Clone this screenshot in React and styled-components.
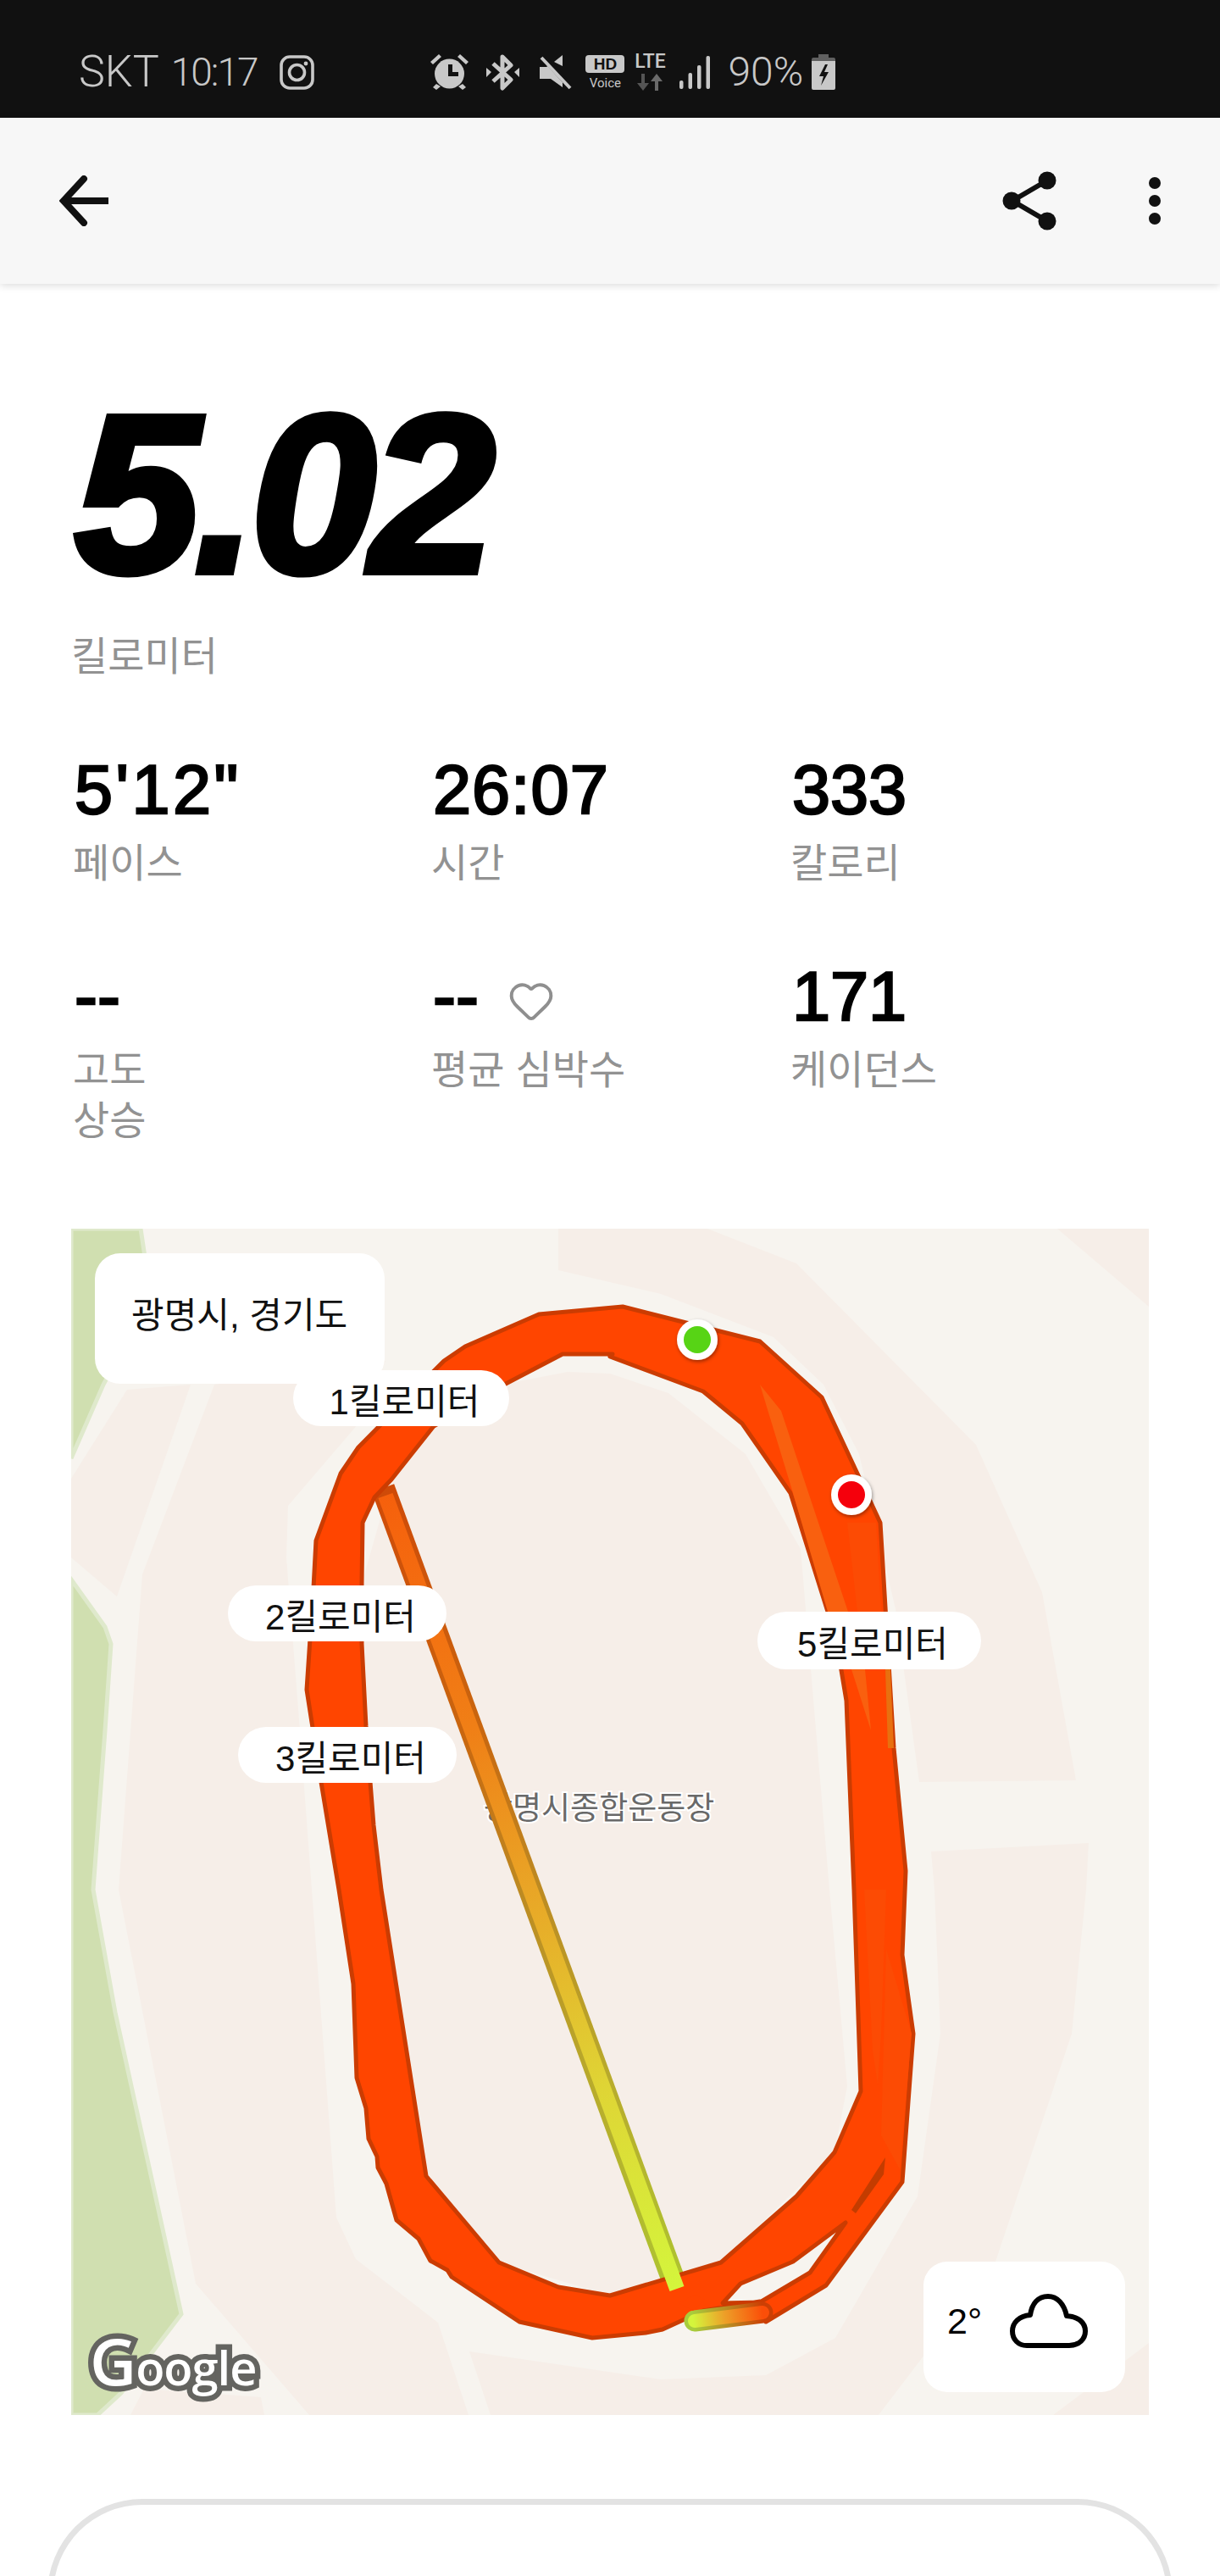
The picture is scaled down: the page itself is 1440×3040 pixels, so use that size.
import React from 'react';
import styled, { createGlobalStyle } from 'styled-components';
import { Heart } from 'lucide-react';

const Global = createGlobalStyle`
  html, body {
    margin: 0;
    padding: 0;
    background: #fff;
    overflow: hidden;
  }
`;

const sans = `"Liberation Sans", "Noto Sans CJK KR", sans-serif`;

const Page = styled.div`
  width: 1440px;
  height: 3040px;
  overflow: hidden;
  background: #fff;
  font-family: ${sans};
`;

const StatusBar = styled.div`
  height: 139px;
  background: #111;
  color: #c8c8c8;
  display: flex;
  align-items: center;
  padding: 31px 0 0 93px;
  box-sizing: border-box;
  font-family: Roboto, sans-serif;
  font-weight: 300;
`;

const StatusText = styled.span`
  font-size: ${(p) => p.$size}px;
  line-height: 50px;
  letter-spacing: ${(p) => p.$track || 0}px;
  margin-left: ${(p) => p.$gap || 0}px;
`;

const StatusIcon = styled.svg`
  display: block;
  flex: none;
  margin-left: ${(p) => p.$gap || 0}px;
`;

const NetArrows = styled.svg`
  display: block;
  margin-top: 4px;
`;

const NetStack = styled.div`
  width: 46px;
  margin-left: ${(p) => p.$gap}px;
  display: flex;
  flex-direction: column;
  align-items: center;
`;

const HdBadge = styled.span`
  width: 46px;
  height: 21px;
  border-radius: 4px;
  background: #c8c8c8;
  color: #111;
  font-size: 19px;
  line-height: 21px;
  font-weight: 700;
  text-align: center;
  font-family: "Liberation Sans", sans-serif;
`;

const VoiceLabel = styled.span`
  font-size: 15px;
  line-height: 16px;
  margin-top: 4px;
  font-weight: 400;
`;

const LteLabel = styled.span`
  font-size: 23px;
  line-height: 20px;
  font-weight: 500;
`;

const AppBar = styled.header`
  position: relative;
  height: 196px;
  background: #f7f7f7;
  box-shadow: 0 2px 9px rgba(0, 0, 0, 0.14);
  display: flex;
  align-items: center;
  justify-content: space-between;
  padding: 0 70px 0 70px;
  box-sizing: border-box;
`;

const ActionGroup = styled.div`
  display: flex;
  align-items: center;
  gap: 107px;
`;

const Content = styled.main`
  padding: 0 84px;
`;

const Distance = styled.div`
  margin-top: 115px;
  height: 266px;
  padding-left: 4px;
  font-size: 266px;
  line-height: 266px;
  font-weight: 700;
  font-style: italic;
  letter-spacing: -7px;
  color: #000;
  -webkit-text-stroke: 8px #000;
`;

const DistanceUnit = styled.div`
  margin-top: 29px;
  font-size: 47px;
  line-height: 60px;
  color: #929292;
`;

const StatGrid = styled.div`
  display: grid;
  grid-template-columns: 423px 424px 1fr;
  row-gap: 84px;
  margin-top: 84px;
  padding-left: 4px;
`;

const Stat = styled.div`
  min-height: 150px;
`;

const StatValue = styled.div`
  display: flex;
  align-items: center;
  gap: 34px;
  height: 86px;
  font-size: 81px;
  line-height: 86px;
  font-weight: 400;
  letter-spacing: ${(p) => p.$track || 0}px;
  color: #000;
  -webkit-text-stroke: 2.5px #000;
`;

const StatLabel = styled.div`
  margin: 14px 0 0 -2px;
  font-size: 47px;
  line-height: 60px;
  color: #929292;
  white-space: pre-line;
`;

const HeartMark = styled(Heart)`
  margin-top: 10px;
  -webkit-text-stroke: 0;
`;

const MapBox = styled.section`
  position: relative;
  width: 1272px;
  height: 1400px;
  margin-top: 97px;
  overflow: hidden;
  background: #f7f4ef;
`;

const MapArt = styled.svg`
  display: block;
  width: 100%;
  height: 100%;
`;

const MapText = styled.text`
  font-family: ${sans};
  font-size: 37px;
  fill: #696969;
  stroke: #fff;
  stroke-width: 4px;
  paint-order: stroke fill;
`;

const PlaceCard = styled.div`
  position: absolute;
  left: 28px;
  top: 29px;
  width: 342px;
  height: 154px;
  box-sizing: border-box;
  padding: 44px 0 0 43px;
  background: #fff;
  border-radius: 30px;
  font-size: 42px;
  line-height: 60px;
  color: #111;
`;

const KmPill = styled.div`
  position: absolute;
  left: ${(p) => p.$x}px;
  top: ${(p) => p.$y}px;
  width: ${(p) => p.$w}px;
  height: ${(p) => p.$h || 66}px;
  box-sizing: border-box;
  padding-left: 8px;
  display: flex;
  align-items: center;
  justify-content: center;
  background: #fff;
  border-radius: 34px;
  font-size: 42px;
  color: #111;
`;

const GoogleMark = styled.div`
  position: absolute;
  left: 22px;
  bottom: 26px;
  font-family: "Open Sans", sans-serif;
  font-size: 56px;
  line-height: 62px;
  font-weight: 600;
  letter-spacing: -1px;
  color: #fff;
  -webkit-text-stroke: 13px #646460;
  paint-order: stroke fill;
`;

const GoogleCap = styled.span`
  font-size: 76px;
`;

const WeatherCard = styled.div`
  position: absolute;
  right: 28px;
  bottom: 27px;
  width: 238px;
  height: 154px;
  box-sizing: border-box;
  padding: 0 0 14px 28px;
  display: flex;
  align-items: center;
  gap: 33px;
  background: #fff;
  border-radius: 28px;
  font-size: 43px;
  color: #000;
`;

const DetailCard = styled.div`
  margin: 99px -28px 0;
  height: 400px;
  box-sizing: border-box;
  border: 7px solid #e3e3e3;
  border-bottom: 0;
  border-radius: 112px 112px 0 0;
  padding-top: 77px;
  text-align: center;
  font-size: 48px;
  line-height: 70px;
  font-weight: 700;
  color: #111;
`;

const stats = [
  { value: "5'12\"", label: '페이스', track: 3.5 },
  { value: '26:07', label: '시간', track: 1 },
  { value: '333', label: '칼로리' },
  { value: '--', label: '고도\n상승' },
  { value: '--', label: '평균 심박수', heart: true },
  { value: '171', label: '케이던스' },
];

const pills = [
  { text: '1킬로미터', x: 262, y: 167, w: 255 },
  { text: '2킬로미터', x: 185, y: 421, w: 258 },
  { text: '3킬로미터', x: 197, y: 588, w: 258 },
  { text: '5킬로미터', x: 810, y: 452, w: 264, h: 68 },
];

// track outline, outer edge then the inner edge and the small gap at the bottom right
const routePath = `
  M735 1542 L636 1551 L549 1589 L524 1606 L423 1708 L402 1739 L373 1818 L370 1874 L362 1994
  L379 2103 L400 2230 L417 2341 L421 2452 L432 2488 L435 2524 L445 2545 L446 2558 L456 2577
  L468 2620 L494 2642 L508 2668 L528 2679 L533 2687 L613 2740 L699 2759 L762 2753 L782 2749
  L830 2727 L897 2716 L904 2740 L975 2697 L1065 2575 L1078 2400 L1065 2307 L1069 2208
  L1055 2063 L1039 1797 L970 1649 L897 1583 Z
  M720 1601 L830 1642 L876 1680 L933 1762 L977 1902 L993 1971 L999 2007 L1008 2230 L1016 2468
  L985 2540 L940 2592 L851 2670 L720 2709 L659 2699 L589 2670 L503 2568 L450 2230 L441 2154
  L437 2103 L432 2037 L427 1940 L427 1869 L428 1797 L442 1767 L462 1746 L512 1683 L597 1633
  L664 1598 L723 1598 Z
  M853 2718 L874 2695 L936 2669 L998 2623 L956 2682 L897 2717 Z
`;

function MapDrawing() {
  return (
    <MapArt viewBox="84 1450 1272 1400">
      <defs>
        <linearGradient id="lineCore" gradientUnits="userSpaceOnUse" x1="452" y1="1756" x2="799" y2="2701">
          <stop offset="0" stopColor="#f65f0c" />
          <stop offset="0.3" stopColor="#f07f16" />
          <stop offset="0.5" stopColor="#e9a526" />
          <stop offset="0.75" stopColor="#dfd535" />
          <stop offset="1" stopColor="#d4f53c" />
        </linearGradient>
        <linearGradient id="lineEdge" gradientUnits="userSpaceOnUse" x1="452" y1="1756" x2="799" y2="2701">
          <stop offset="0" stopColor="#cf4a08" />
          <stop offset="0.3" stopColor="#c9660f" />
          <stop offset="0.5" stopColor="#bd8a22" />
          <stop offset="0.75" stopColor="#b8ac2c" />
          <stop offset="1" stopColor="#aec430" />
        </linearGradient>
        <linearGradient id="stubCore" gradientUnits="userSpaceOnUse" x1="818" y1="2738" x2="900" y2="2727">
          <stop offset="0" stopColor="#d4f53c" />
          <stop offset="0.45" stopColor="#eda028" />
          <stop offset="1" stopColor="#fb4e08" />
        </linearGradient>
        <linearGradient id="stubEdge" gradientUnits="userSpaceOnUse" x1="818" y1="2738" x2="900" y2="2727">
          <stop offset="0" stopColor="#a8cc3c" />
          <stop offset="0.5" stopColor="#b98a22" />
          <stop offset="1" stopColor="#cc3f04" />
        </linearGradient>
        <filter id="pinShadow" x="-30%" y="-30%" width="160%" height="160%">
          <feDropShadow dx="1" dy="2" stdDeviation="2" floodColor="#000" floodOpacity="0.4" />
        </filter>
      </defs>

      {/* parcels, the light map road colour is the box background */}
      <g fill="#f6eee8">
        <polygon points="1248,1450 1356,1450 1356,1542" />
        <polygon points="659,1450 835,1450 940,1491 1152,1705 1230,1879 1270,2101 1085,2103 1057,1899 1014,1716 972,1634 913,1578 780,1527 659,1499" />
        <polygon points="670,1619 720,1621 789,1644 880,1716 945,1828 979,2230 1000,2462 985,2540 851,2670 720,2709 589,2670 503,2568 440,2150 427,1869 462,1746 512,1683 597,1633" />
        <polygon points="1099,2185 1285,2175 1282,2230 1265,2400 1175,2669 1037,2850 579,2850 554,2775 780,2808 904,2803 986,2759 1083,2592 1110,2400 1103,2230" />
        <polygon points="1243,2850 1356,2765 1356,2850" />
        <polygon points="253,1634 455,1606 423,1680 340,1777 338,1838 354,2042 368,2230 397,2617 420,2666 517,2741 553,2850 365,2850 231,2695 140,2230 168,1858" />
        <polygon points="154,2850 170,2819 308,2829 312,2850" />
        <polygon points="150,1640 225,1634 138,1884 84,1838 84,1745" />
      </g>
      <g fill="#d0dfb0" stroke="#dfe9cc" strokeWidth="5">
        <polygon points="84,1450 166,1450 172,1490 140,1600 122,1634 84,1721" />
        <polygon points="84,1864 124,1920 131,1940 124,2042 110,2230 136,2375 214,2731 143,2824 115,2850 84,2850" />
      </g>

      <MapText x="571" y="2147">광명시종합운동장</MapText>

      <line x1="452" y1="1756" x2="796" y2="2694" stroke="url(#lineEdge)" strokeWidth="28" />

      <path d={routePath} fill="#ff4500" fillRule="evenodd" stroke="#cb3c02" strokeWidth="5" strokeLinejoin="round" />
      <g fill="#f9600f">
        <polygon points="897,1634 922,1665 1001,1902 977,1902 936,1762" />
        <polygon points="1005,1970 1021,1970 1028,2042" />
      </g>
      <g fill="#fc4b04">
        <polygon points="1020,2230 1046,2230 1040,2400 1036,2460 1030,2420" />
        <polygon points="1046,2300 1076,2400 1062,2560 1040,2520" />
        <polygon points="1000,1797 1034,1797 1040,1902 1012,1902" />
      </g>
      <polygon points="1045,1970 1051,1970 1055,2063 1048,2063" fill="#e8700f" />
      <polygon points="1005,2608 1045,2546 1043,2566 1010,2612" fill="#c43c00" />

      <line x1="455" y1="1765" x2="799" y2="2701" stroke="url(#lineCore)" strokeWidth="18" />
      <line x1="820" y1="2739" x2="900" y2="2729" stroke="url(#stubEdge)" strokeWidth="25" strokeLinecap="round" />
      <line x1="820" y1="2739" x2="900" y2="2729" stroke="url(#stubCore)" strokeWidth="16" strokeLinecap="round" />
      <polygon points="802,2718 818,2727 832,2714 820,2708" fill="#ff4500" />

      <g filter="url(#pinShadow)">
        <circle cx="823" cy="1581" r="24" fill="#fff" />
        <circle cx="1005" cy="1764" r="24" fill="#fff" />
      </g>
      <circle cx="823" cy="1581" r="16" fill="#57d415" />
      <circle cx="1005" cy="1764" r="16" fill="#f5000c" />
    </MapArt>
  );
}

function App() {
  return (
    <Page>
      <Global />
      <StatusBar>
        <StatusText $size={52}>SKT</StatusText>
        <StatusText $size={46} $gap={14} $track={-2}>10:17</StatusText>
        <StatusIcon $gap={27} width="41" height="41" viewBox="0 0 41 41" fill="none" stroke="#c8c8c8" strokeWidth="3.6">
          <rect x="2" y="2" width="37" height="37" rx="10" />
          <circle cx="20.5" cy="20.5" r="9" />
          <circle cx="31" cy="10" r="2.4" fill="#c8c8c8" stroke="none" />
        </StatusIcon>

        <StatusIcon $gap={137} width="45" height="42" viewBox="0 0 45 42" fill="#c8c8c8">
          <circle cx="22.5" cy="23" r="17.5" />
          <path d="M0 9 L10 0 L13 3 L3 12Z M45 9 L35 0 L32 3 L42 12Z M7 35 L12 38 L7 42 L3 39Z M38 35 L33 38 L38 42 L42 39Z" />
          <path d="M21 12 H26 V21 H33 V26 H21Z" fill="#111" />
        </StatusIcon>
        <StatusIcon $gap={21} width="39" height="43" viewBox="0 0 39 43" fill="none" stroke="#c8c8c8" strokeWidth="5" strokeLinejoin="round">
          <path d="M8 11 L29 30 L19 40 V3 L29 13 L8 32" />
          <path d="M0 16 L6 21 L0 27Z M39 16 L33 21 L39 27Z" fill="#c8c8c8" stroke="none" />
        </StatusIcon>
        <StatusIcon $gap={24} width="38" height="41" viewBox="0 0 38 41" fill="#c8c8c8">
          <path d="M0 14 H8 L14 10 L27 24 V38 L13 28 H0Z" />
          <path d="M17 8 L27 0 V13Z" />
          <path d="M3 1 L37 38" stroke="#111" strokeWidth="7" />
          <path d="M2 3 L36 39" stroke="#c8c8c8" strokeWidth="4" />
        </StatusIcon>
        <NetStack $gap={16}>
          <HdBadge>HD</HdBadge>
          <VoiceLabel>Voice</VoiceLabel>
        </NetStack>
        <NetStack $gap={7}>
          <LteLabel>LTE</LteLabel>
          <NetArrows width="32" height="20" viewBox="0 0 32 20">
            <path d="M6 0 H10 V11 H15 L8 20 L1 11 H6Z" fill="#555" />
            <path d="M22 20 H26 V9 H31 L24 0 L17 9 H22Z" fill="#6a6a6a" />
          </NetArrows>
        </NetStack>
        <StatusIcon $gap={12} width="36" height="39" viewBox="0 0 36 39" fill="#c8c8c8">
          <rect x="0" y="29" width="4.5" height="10" rx="2" />
          <rect x="10.5" y="20" width="4.5" height="19" rx="2" />
          <rect x="21" y="11" width="4.5" height="28" rx="2" />
          <rect x="31.5" y="0" width="4.5" height="39" rx="2" />
        </StatusIcon>
        <StatusText $size={48} $gap={21}>90%</StatusText>
        <StatusIcon $gap={10} width="28" height="42" viewBox="0 0 28 42">
          <path d="M8 0 H20 V4 H26 Q28 4 28 6 V10 H0 V6 Q0 4 2 4 H8Z" fill="#606060" />
          <path d="M0 8 H28 V40 Q28 42 26 42 H2 Q0 42 0 40Z" fill="#c8c8c8" />
          <path d="M16 12 L9 26 H14 L11 37 L20 21 H15 L19 12Z" fill="#111" />
        </StatusIcon>
      </StatusBar>

      <AppBar>
        <svg width="58" height="60" viewBox="0 0 58 60" fill="none" stroke="#111" strokeWidth="8">
          <path d="M29 4 L5 30 L29 56" strokeLinecap="round" />
          <path d="M6 30 H58" />
        </svg>
        <ActionGroup>
          <svg width="66" height="72" viewBox="0 0 66 72" fill="#111" stroke="#111">
            <path d="M53 12 L12 36 L53 60" fill="none" strokeWidth="6" />
            <circle cx="53" cy="12" r="10.5" stroke="none" />
            <circle cx="11" cy="36" r="10.5" stroke="none" />
            <circle cx="53" cy="60" r="10.5" stroke="none" />
          </svg>
          <svg width="14" height="56" viewBox="0 0 14 56" fill="#111">
            <circle cx="7" cy="7" r="7" />
            <circle cx="7" cy="28" r="7" />
            <circle cx="7" cy="49" r="7" />
          </svg>
        </ActionGroup>
      </AppBar>

      <Content>
        <Distance>5.02</Distance>
        <DistanceUnit>킬로미터</DistanceUnit>

        <StatGrid>
          {stats.map((s, i) => (
            <Stat key={i}>
              <StatValue $track={s.track}>
                {s.value}
                {s.heart && <HeartMark size={56} color="#8f8f8f" strokeWidth={1.7} />}
              </StatValue>
              <StatLabel>{s.label}</StatLabel>
            </Stat>
          ))}
        </StatGrid>

        <MapBox>
          <MapDrawing />
          <PlaceCard>광명시, 경기도</PlaceCard>
          {pills.map((p) => (
            <KmPill key={p.text} $x={p.x} $y={p.y} $w={p.w} $h={p.h}>{p.text}</KmPill>
          ))}
          <GoogleMark><GoogleCap>G</GoogleCap>oogle</GoogleMark>
          <WeatherCard>
            <span>2°</span>
            <svg width="92" height="64" viewBox="0 0 92 64" fill="none" stroke="#000" strokeWidth="6" strokeLinejoin="round">
              <path d="M20 61 H70 C82 61 89 53 89 44 C89 34 81 27 67 26 C64 12 56 3 45 3 C33 3 26 12 24 25 C11 26 3 34 3 44 C3 54 10 61 20 61Z" />
            </svg>
          </WeatherCard>
        </MapBox>

        <DetailCard>상세 정보</DetailCard>
      </Content>
    </Page>
  );
}

export default App;
